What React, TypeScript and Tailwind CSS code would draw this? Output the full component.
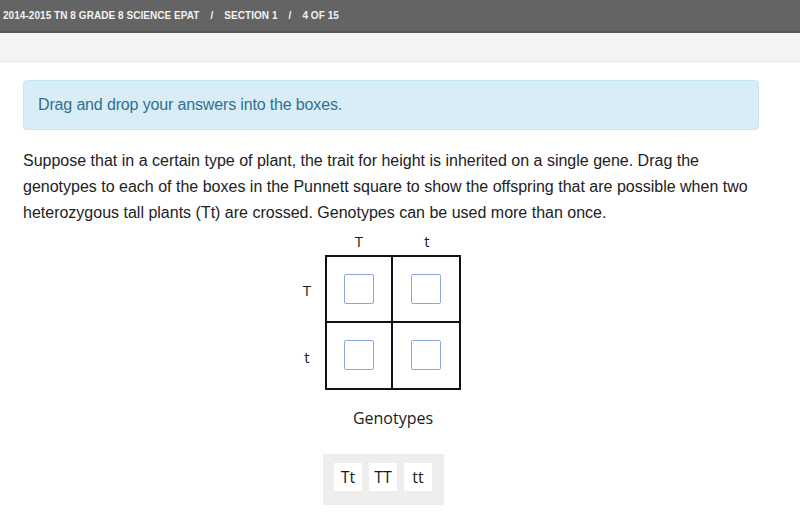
export default function App() {
  const genotypes = ["Tt", "TT", "tt"];

  return (
    <div className="min-h-[531px] bg-white font-['Liberation_Sans',Arial,sans-serif]">
      {/* top bar */}
      <div className="h-[33px] bg-[#646464] border-b-2 border-[#575757] flex items-center pl-[3px]">
        <span className="text-[10px] font-bold text-[#f2f2f2] uppercase tracking-[0.05px]">
          2014-2015 TN 8 Grade 8 Science EPAT
          <span className="mx-[11px]">/</span>
          Section 1
          <span className="mx-[11px]">/</span>
          4 of 15
        </span>
      </div>
      <div className="h-[29px] bg-[#f3f3f3] border-b border-[#e8e8e8]" />

      <div className="px-[23px] pr-[41px]">
        <div className="mt-[18px] h-[50px] rounded bg-[#d9edf7] border border-[#c4e6f2] flex items-center px-[14px]">
          <span className="text-[16px] text-[#31708f] tracking-[-0.15px]">Drag and drop your answers into the boxes.</span>
        </div>

        <p className="mt-[18px] text-[16px] leading-[26px] text-[#222]">
          Suppose that in a certain type of plant, the trait for height is inherited on a single gene. Drag the
          genotypes to each of the boxes in the Punnett square to show the offspring that are possible when two
          heterozygous tall plants (Tt) are crossed. Genotypes can be used more than once.
        </p>

        {/* punnett square */}
        <div className="ml-[272px] mt-[1px] font-['Open_Sans',sans-serif] text-[#1a1a1a]">
          <div className="flex pl-[30px] h-[28px] items-center text-[15px]">
            <div className="w-[68px] text-center">T</div>
            <div className="w-[68px] text-center">t</div>
          </div>
          <div className="flex">
            <div className="w-[30px] flex flex-col pt-[2px] pr-[6px] text-[15px]">
              <div className="h-[67px] flex items-center justify-center">T</div>
              <div className="h-[67px] flex items-center justify-center">t</div>
            </div>
            <div className="w-[136px] h-[135px] border-2 border-[#111] grid grid-cols-2 grid-rows-2">
              {[0, 1, 2, 3].map((i) => (
                <div
                  key={i}
                  className={
                    "flex items-center justify-center border-[#111] " +
                    (i % 2 === 0 ? "border-r-2 " : "") +
                    (i < 2 ? "border-b-2" : "")
                  }
                >
                  <div className="w-[30px] h-[30px] border border-[#89a6e2] rounded-[2px]" />
                </div>
              ))}
            </div>
          </div>

          <div className="w-[136px] ml-[30px] mt-[15px] text-center text-[16px]">Genotypes</div>

          <div className="ml-[28px] mt-[24px] w-[121px] h-[51px] bg-[#eeeeee] flex items-center gap-[7px] px-[11px] pb-[6px]">
            {genotypes.map((g) => (
              <div
                key={g}
                className="w-[28px] h-[28px] bg-white flex items-center justify-center text-[16px]"
              >
                {g}
              </div>
            ))}
          </div>
        </div>
      </div>
    </div>
  );
}
